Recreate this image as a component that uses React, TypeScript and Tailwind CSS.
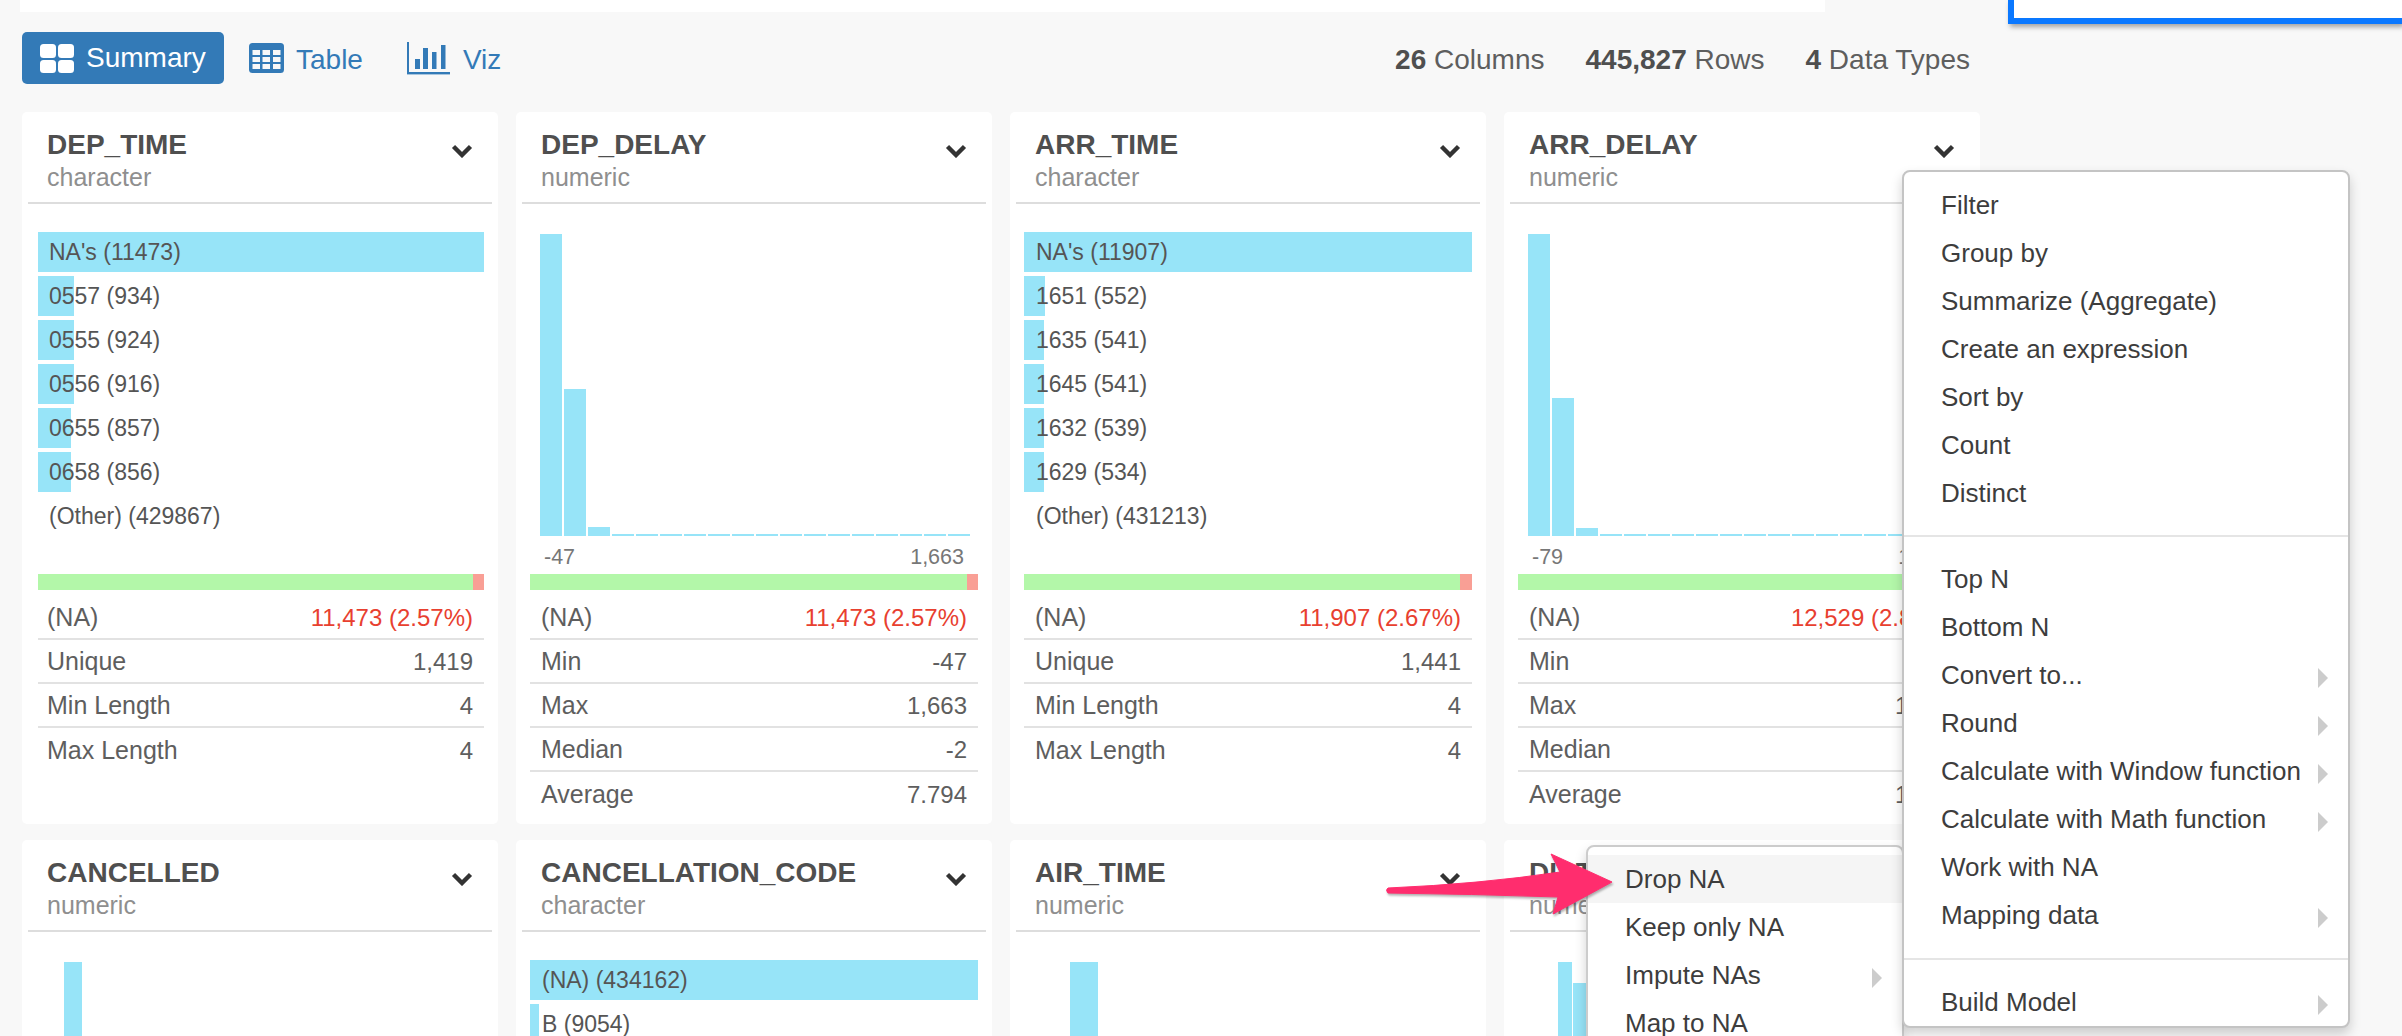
import React from "react";

type Category = { label: string; count: number };
type Stat = { label: string; value: string; red?: boolean };
type Column = {
  name: string;
  type: string;
  categories?: Category[];
  bars?: number[];
  barWidth?: number;
  barGap?: number;
  barOffset?: number;
  min?: string;
  max?: string;
  naPct?: number;
  stats?: Stat[];
};

const columns: Column[] = [
  {
    name: "DEP_TIME",
    type: "character",
    categories: [
      { label: "NA's", count: 11473 },
      { label: "0557", count: 934 },
      { label: "0555", count: 924 },
      { label: "0556", count: 916 },
      { label: "0655", count: 857 },
      { label: "0658", count: 856 },
      { label: "(Other)", count: 0 },
    ],
    naPct: 2.57,
    stats: [
      { label: "(NA)", value: "11,473 (2.57%)", red: true },
      { label: "Unique", value: "1,419" },
      { label: "Min Length", value: "4" },
      { label: "Max Length", value: "4" },
    ],
  },
  {
    name: "DEP_DELAY",
    type: "numeric",
    bars: [302, 147, 9, 2, 2, 2, 2, 2, 2, 2, 2, 2, 2, 2, 2, 2, 2, 2],
    min: "-47",
    max: "1,663",
    naPct: 2.57,
    stats: [
      { label: "(NA)", value: "11,473 (2.57%)", red: true },
      { label: "Min", value: "-47" },
      { label: "Max", value: "1,663" },
      { label: "Median", value: "-2" },
      { label: "Average", value: "7.794" },
    ],
  },
  {
    name: "ARR_TIME",
    type: "character",
    categories: [
      { label: "NA's", count: 11907 },
      { label: "1651", count: 552 },
      { label: "1635", count: 541 },
      { label: "1645", count: 541 },
      { label: "1632", count: 539 },
      { label: "1629", count: 534 },
      { label: "(Other)", count: 0 },
    ],
    naPct: 2.67,
    stats: [
      { label: "(NA)", value: "11,907 (2.67%)", red: true },
      { label: "Unique", value: "1,441" },
      { label: "Min Length", value: "4" },
      { label: "Max Length", value: "4" },
    ],
  },
  {
    name: "ARR_DELAY",
    type: "numeric",
    bars: [302, 138, 8, 2, 2, 2, 2, 2, 2, 2, 2, 2, 2, 2, 2, 2, 2, 2],
    min: "-79",
    max: "1,655",
    naPct: 2.81,
    stats: [
      { label: "(NA)", value: "12,529 (2.81%)", red: true },
      { label: "Min", value: "-79" },
      { label: "Max", value: "1,655" },
      { label: "Median", value: "-6" },
      { label: "Average", value: "1.794" },
    ],
  },
  { name: "CANCELLED", type: "numeric", bars: [302], barWidth: 18, barOffset: 26 },
  {
    name: "CANCELLATION_CODE",
    type: "character",
    categories: [
      { label: "(NA)", count: 434162 },
      { label: "B", count: 9054 },
    ],
  },
  { name: "AIR_TIME", type: "numeric", bars: [302], barWidth: 28, barOffset: 46 },
  { name: "DISTANCE", type: "numeric", bars: [302, 281], barWidth: 14, barGap: 1, barOffset: 40 },
];

const menuTop = [
  "Filter",
  "Group by",
  "Summarize (Aggregate)",
  "Create an expression",
  "Sort by",
  "Count",
  "Distinct",
];
const menuMiddle = [
  { label: "Top N" },
  { label: "Bottom N" },
  { label: "Convert to...", sub: true },
  { label: "Round", sub: true },
  { label: "Calculate with Window function", sub: true },
  { label: "Calculate with Math function", sub: true },
  { label: "Work with NA" },
  { label: "Mapping data", sub: true },
];

function Chevron() {
  return (
    <svg width="22" height="14" viewBox="0 0 22 14" className="mt-[15px] shrink-0">
      <path d="M2.5 2.5 L11 11 L19.5 2.5" fill="none" stroke="#333333" strokeWidth="4.4" />
    </svg>
  );
}

function SummaryIcon() {
  return (
    <svg width="34" height="29" viewBox="0 0 34 29" fill="#ffffff">
      <rect x="0" y="0" width="16" height="14" rx="3.5" />
      <rect x="18" y="0" width="16" height="14" rx="3.5" />
      <rect x="0" y="16" width="16" height="13" rx="3.5" />
      <rect x="18" y="16" width="16" height="13" rx="3.5" />
    </svg>
  );
}

function TableIcon() {
  const xs = [3.5, 13.5, 24];
  const ys = [7, 14, 21];
  return (
    <svg width="35" height="30" viewBox="0 0 35 30">
      <rect width="35" height="30" rx="3.5" fill="#337ab7" />
      {ys.map((y) =>
        xs.map((x) => <rect key={`${x}-${y}`} x={x} y={y} width="7.5" height="5" fill="#f8f8f8" />)
      )}
    </svg>
  );
}

function VizIcon() {
  return (
    <svg width="44" height="33" viewBox="0 0 44 33" fill="#337ab7">
      <rect x="0" y="0" width="2" height="32" />
      <rect x="0" y="30" width="43" height="2.4" />
      <rect x="8" y="17" width="5" height="10" />
      <rect x="16" y="6" width="5" height="21" />
      <rect x="25" y="10" width="4.5" height="17" />
      <rect x="34" y="3" width="4.5" height="24" />
    </svg>
  );
}

function SubArrow() {
  return (
    <span className="mt-[6px] h-0 w-0 border-y-[10px] border-l-[10px] border-y-transparent border-l-[#cccccc]" />
  );
}

function CategoryChart({ items, first }: { items: Category[]; first: boolean }) {
  const max = items[0].count;
  return (
    <div className="flex flex-col gap-1 pt-[28px]">
      {items.map((item) => (
        <div key={item.label} className="relative h-10">
          <div className="h-full bg-[#97e4f8]" style={{ width: `${(item.count / max) * 100}%` }} />
          <span
            className={`absolute top-0 text-[23px] leading-10 text-[#555555] ${first ? "left-[11px]" : "left-3"}`}
          >
            {item.label} {item.label === "(Other)" ? (first ? "(429867)" : "(431213)") : `(${item.count})`}
          </span>
        </div>
      ))}
    </div>
  );
}

function HistChart({ col }: { col: Column }) {
  return (
    <div className="pt-[30px]">
      <div
        className="flex h-[302px] items-end"
        style={{ paddingLeft: col.barOffset ?? 10, gap: col.barGap ?? 2 }}
      >
        {col.bars!.map((h, i) => (
          <div key={i} className="bg-[#97e4f8]" style={{ height: h, width: col.barWidth ?? 22 }} />
        ))}
      </div>
      {col.min && (
        <div className="flex justify-between px-[14px] pt-[1px] text-[21.5px] leading-10 text-[#777777]">
          <span>{col.min}</span>
          <span>{col.max}</span>
        </div>
      )}
    </div>
  );
}

function ColumnCard({ col, first }: { col: Column; first: boolean }) {
  return (
    <div className="h-[712px] rounded-[5px] bg-white">
      <div className="mx-[6px] flex h-[92px] justify-between border-b-2 border-[#dddddd] pl-[19px] pr-[19px] pt-[17px]">
        <div>
          <div className="text-[28px] font-bold leading-8 text-[#4f4f4f]">{col.name}</div>
          <div className="mt-[1px] text-[25px] leading-[30px] text-[#8f8f8f]">{col.type}</div>
        </div>
        <Chevron />
      </div>
      <div className={`pr-[14px] ${first ? "pl-4" : "pl-[14px]"}`}>
        <div className="h-[370px]">
          {col.categories ? (
            <CategoryChart items={col.categories} first={first} />
          ) : (
            <HistChart col={col} />
          )}
        </div>
        {col.naPct && (
          <div className="flex h-4 bg-[#b3f7a9]">
            <div className="flex-1" />
            <div className="bg-[#f99f95]" style={{ width: `${col.naPct}%` }} />
          </div>
        )}
        <div className="mt-[6px]">
          {col.stats?.map((s, i) => (
            <div
              key={s.label}
              className={`flex h-11 items-center justify-between pr-[11px] pt-[2px] text-[#5e5e5e] ${first ? "pl-[9px]" : "pl-[11px]"} ${i < col.stats!.length - 1 ? "border-b-2 border-[#e2e2e2]" : ""}`}
            >
              <span className="text-[25px]">{s.label}</span>
              <span className={`text-[24px] ${s.red ? "text-[#e8402f]" : ""}`}>{s.value}</span>
            </div>
          ))}
        </div>
      </div>
    </div>
  );
}

export default function App() {
  return (
    <div
      className="relative h-[1036px] w-[2402px] overflow-hidden bg-[#f8f8f8]"
      style={{ fontFamily: '"Liberation Sans", Arial, sans-serif' }}
    >
      {/* Top strip */}
      <div className="ml-5 h-3 w-[1805px] bg-white" />
      <div className="absolute left-[2008px] right-0 top-0 h-6 border-b-[6px] border-l-[6px] border-[#0a78ff] bg-white shadow-[2px_3px_5px_rgba(0,0,0,0.35)]" />

      {/* Tabs and totals */}
      <div className="ml-[22px] mr-[432px] mt-5 flex h-[52px] items-center justify-between">
        <div className="flex items-center text-[28px] text-[#337ab7]">
          <button className="flex h-[52px] w-[202px] items-center gap-3 rounded-[5px] bg-[#337ab7] pl-[18px] text-white">
            <SummaryIcon />
            <span className="-mt-[1px]">Summary</span>
          </button>
          <div className="ml-[25px] flex items-center gap-3">
            <TableIcon />
            <span className="mt-[3px]">Table</span>
          </div>
          <div className="ml-[44px] flex items-center gap-3">
            <VizIcon />
            <span className="mt-[3px]">Viz</span>
          </div>
        </div>
        <div className="mt-[3px] flex gap-[41px] text-[28px] text-[#5e5e5e]">
          <span>
            <b className="text-[#4f4f4f]">26</b> Columns
          </span>
          <span>
            <b className="text-[#4f4f4f]">445,827</b> Rows
          </span>
          <span>
            <b className="text-[#4f4f4f]">4</b> Data Types
          </span>
        </div>
      </div>

      {/* Column cards */}
      <div className="ml-[22px] mt-7 grid grid-cols-[repeat(4,476px)] gap-x-[18px] gap-y-4">
        {columns.map((col, i) => (
          <ColumnCard key={col.name} col={col} first={i === 0 || i === 4} />
        ))}
      </div>

      {/* Sub menu */}
      <div className="absolute left-[1586px] top-[845px] z-10 w-[318px] rounded-lg border-2 border-[#cccccc] bg-white pt-[8px] text-[26px] text-[#3d3d3d] shadow-[0_6px_12px_rgba(0,0,0,0.18)]">
        <div className="flex h-12 items-center bg-[#f5f5f5] pl-[37px]">Drop NA</div>
        <div className="flex h-12 items-center pl-[37px]">Keep only NA</div>
        <div className="flex h-12 items-center justify-between pl-[37px] pr-5">
          <span>Impute NAs</span>
          <SubArrow />
        </div>
        <div className="flex h-12 items-center pl-[37px]">Map to NA</div>
      </div>

      {/* Main menu */}
      <div className="absolute left-[1902px] top-[170px] z-20 w-[448px] rounded-lg border-2 border-[#c4c4c4] bg-white pt-[9px] text-[26px] text-[#3d3d3d] shadow-[0_6px_12px_rgba(0,0,0,0.18)]">
        {menuTop.map((label) => (
          <div key={label} className="flex h-12 items-center pl-[37px]">
            {label}
          </div>
        ))}
        <div className="mb-[18px] mt-[18px] h-[2px] bg-[#e5e5e5]" />
        {menuMiddle.map((item) => (
          <div key={item.label} className="flex h-12 items-center justify-between pl-[37px] pr-5">
            <span>{item.label}</span>
            {item.sub && <SubArrow />}
          </div>
        ))}
        <div className="mb-[18px] mt-[19px] h-[2px] bg-[#e5e5e5]" />
        <div className="flex h-12 items-center justify-between pl-[37px] pr-5">
          <span>Build Model</span>
          <SubArrow />
        </div>
      </div>

      {/* Annotation arrow */}
      <svg
        width="240"
        height="70"
        viewBox="1380 850 240 70"
        className="absolute left-[1380px] top-[850px] z-30 drop-shadow-[1px_2px_1px_rgba(0,0,0,0.3)]"
      >
        <path
          d="M1388 888 Q1480 884 1560 872 L1551 854 L1612 882 L1553 914 L1558 897 Q1470 894 1388 893 Q1385 890 1388 888 Z"
          fill="#ff2d6e"
          stroke="#ff2d6e"
          strokeWidth="1"
          strokeLinejoin="round"
        />
      </svg>
    </div>
  );
}
